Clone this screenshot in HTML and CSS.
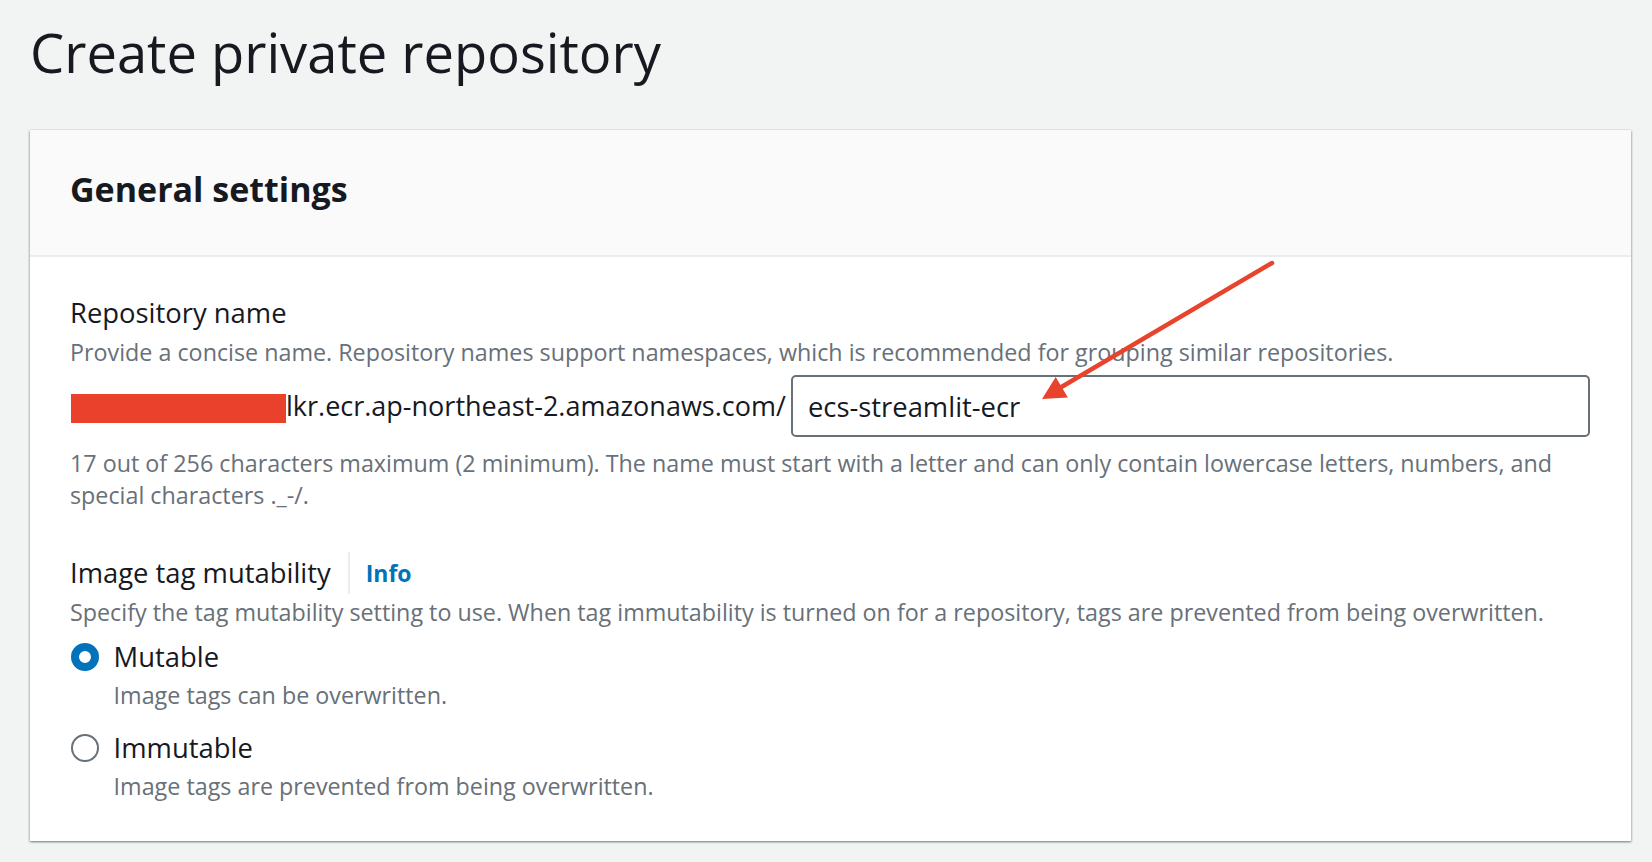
FILE: index.html
```html
<!DOCTYPE html>
<html lang="en">
<head>
<meta charset="utf-8">
<title>Create private repository</title>
<link rel="stylesheet" href="styles.css">
</head>
<body>
<main class="page">
  <h1 class="title">Create private repository</h1>
  <section class="panel">
    <header class="panel-header">
      <h2 class="panel-title">General settings</h2>
    </header>
    <div class="panel-body">
      <div class="field">
        <div class="label">Repository name</div>
        <div class="desc">Provide a concise name. Repository names support namespaces, which is recommended for grouping similar repositories.</div>
        <div class="name-row">
          <span class="prefix"><span class="redact"></span><span class="prefix-text">lkr.ecr.ap-northeast-2.amazonaws.com/</span></span>
          <div class="input">ecs-streamlit-ecr</div>
        </div>
        <div class="constraint">17 out of 256 characters maximum (2 minimum). The name must start with a letter and can only contain lowercase letters, numbers, and special characters ._-/.</div>
      </div>
      <div class="field field-mut">
        <div class="label-row">
          <span class="label">Image tag mutability</span>
          <span class="info-wrap"><a class="info">Info</a></span>
        </div>
        <div class="desc">Specify the tag mutability setting to use. When tag immutability is turned on for a repository, tags are prevented from being overwritten.</div>
        <div class="option option-first">
          <div class="option-row"><span class="radio radio-checked"></span><span class="option-label">Mutable</span></div>
          <div class="option-desc">Image tags can be overwritten.</div>
        </div>
        <div class="option">
          <div class="option-row"><span class="radio"></span><span class="option-label">Immutable</span></div>
          <div class="option-desc">Image tags are prevented from being overwritten.</div>
        </div>
      </div>
    </div>
  </section>
  <svg class="annot" width="1652" height="862" viewBox="0 0 1652 862" aria-hidden="true">
    <line x1="1272" y1="263" x2="1058" y2="389" stroke="#e8432c" stroke-width="4.5" stroke-linecap="round"/>
    <polygon points="1042,399 1055.7,377 1067.9,397.6" fill="#e8432c"/>
  </svg>
</main>
</body>
</html>
```

FILE: styles.css
```css
html, body {
  margin: 0;
  padding: 0;
}
body {
  background: #f2f3f3;
  font-family: "Open Sans", "Noto Sans", sans-serif;
  color: #16191f;
  width: 1652px;
  height: 862px;
  overflow: hidden;
}
.page {
  position: relative;
  padding: 15px 21px 0 30px;
}
.title {
  margin: 0;
  font-size: 54.3px;
  font-weight: 400;
  line-height: 74px;
  color: #16191f;
}
.panel {
  margin-top: 41px;
  background: #fff;
  box-shadow: 0 1px 2px 0 rgba(0, 28, 36, 0.35), 1px 1px 2px 0 rgba(0, 28, 36, 0.15), -1px 1px 2px 0 rgba(0, 28, 36, 0.15), 0 -1px 0 0 #e6e9e9;
}
.panel-header {
  height: 125px;
  box-sizing: content-box;
  background: #fafafa;
  border-bottom: 2px solid #eaeded;
  padding: 0 40px;
}
.panel-title {
  margin: 0;
  padding-top: 36px;
  font-size: 34px;
  font-weight: 700;
  line-height: 46px;
}
.panel-body {
  padding: 35px 41px 39px 40px;
}
.label {
  font-size: 27.4px;
  line-height: 42px;
  color: #16191f;
}
.desc {
  margin-top: 2px;
  font-size: 23.3px;
  line-height: 32px;
  color: #687078;
}
.desc-first {
  letter-spacing: 0;
}
.name-row {
  display: flex;
  align-items: flex-start;
  margin-top: 7px;
}
.prefix {
  display: flex;
  align-items: center;
  margin-top: 10px;
  margin-right: 5px;
  height: 42px;
  font-size: 27px;
  line-height: 42px;
  white-space: nowrap;
}
.redact {
  display: inline-block;
  width: 215px;
  height: 29px;
  margin-left: 1px;
  margin-top: 5px;
  background: #e9412b;
}
.input {
  flex: 1;
  height: 62px;
  box-sizing: border-box;
  border: 2px solid #687078;
  border-radius: 5px;
  padding: 0 15px;
  display: flex;
  align-items: center;
  font-size: 27.4px;
  color: #16191f;
}
.constraint {
  margin-top: 10px;
  font-size: 23.3px;
  line-height: 32px;
  color: #687078;
}
.field-mut {
  margin-top: 41px;
}
.label-row {
  display: flex;
  align-items: stretch;
  height: 42px;
}
.info-wrap {
  display: flex;
  align-items: center;
  margin-left: 17px;
  padding-left: 16px;
  border-left: 2px solid #eaeded;
}
.info {
  font-size: 23px;
  font-weight: 700;
  color: #0073bb;
  line-height: 42px;
}
.option {
  margin-top: 16px;
}
.option-first {
  margin-top: 8px;
}
.option-row {
  display: flex;
  align-items: center;
  height: 42px;
}
.radio {
  width: 28px;
  height: 28px;
  box-sizing: border-box;
  margin-left: 1px;
  border-radius: 50%;
  border: 2px solid #687078;
  background: #fff;
  flex: none;
}
.radio-checked {
  border: 8.5px solid #0073bb;
}
.option-label {
  margin-left: 14.6px;
  font-size: 27.4px;
  line-height: 42px;
}
.option-desc {
  margin-top: 1px;
  padding-left: 43.6px;
  font-size: 23.3px;
  line-height: 32px;
  color: #687078;
}
.annot {
  position: absolute;
  left: 0;
  top: 0;
  pointer-events: none;
}
```
